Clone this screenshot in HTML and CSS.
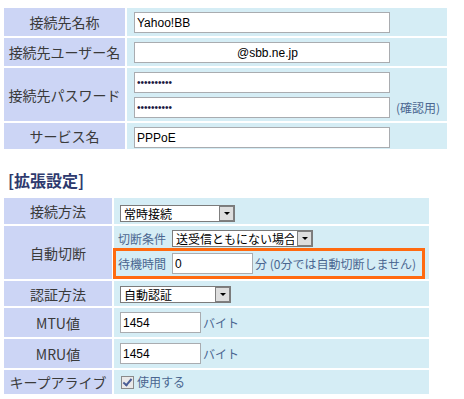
FILE: index.html
```html
<!DOCTYPE html>
<html lang="ja">
<head>
    <meta charset="UTF-8">
    <title>接続先設定</title>
    <link rel="stylesheet" href="styles.css">
</head>
<body>
    <table class="setting main">
        <tr>
            <th>接続先名称</th>
            <td><input type="text" class="long" value="Yahoo!BB"></td>
        </tr>
        <tr>
            <th>接続先ユーザー名</th>
            <td><input type="text" class="long user" value="@sbb.ne.jp"></td>
        </tr>
        <tr>
            <th>接続先パスワード</th>
            <td>
                <div class="line"><input type="password" class="long pw" value="abcdefghij"></div>
                <div class="line pw-check"><input type="password" class="long pw" value="abcdefghij"><span class="note">(確認用)</span></div>
            </td>
        </tr>
        <tr class="last">
            <th>サービス名</th>
            <td><input type="text" class="long" value="PPPoE"></td>
        </tr>
    </table>

    <h3 class="section">[拡張設定]</h3>

    <table class="setting ext">
        <tr class="sel-row first">
            <th>接続方法</th>
            <td>
                <span class="select-wrap mode">
                    <select>
                        <option>常時接続</option>
                        <option>オンデマンド接続</option>
                    </select>
                </span>
            </td>
        </tr>
        <tr class="auto-cut">
            <th>自動切断</th>
            <td>
                <div class="line cond">
                    <span class="note">切断条件</span>
                    <span class="select-wrap cond-sel">
                        <select>
                            <option>送受信ともにない場合</option>
                            <option>送信がない場合</option>
                        </select>
                    </span>
                </div>
                <div class="line wait-box">
                    <span class="note">待機時間</span>
                    <input type="text" class="short wait" value="0">
                    <span class="note">分 (0分では自動切断しません)</span>
                </div>
            </td>
        </tr>
        <tr class="sel-row">
            <th>認証方法</th>
            <td>
                <span class="select-wrap auth">
                    <select>
                        <option>自動認証</option>
                        <option>PAP</option>
                        <option>CHAP</option>
                    </select>
                </span>
            </td>
        </tr>
        <tr>
            <th>MTU値</th>
            <td><div class="line"><input type="text" class="short" value="1454"><span class="note">バイト</span></div></td>
        </tr>
        <tr>
            <th>MRU値</th>
            <td><div class="line"><input type="text" class="short" value="1454"><span class="note">バイト</span></div></td>
        </tr>
        <tr class="check-row">
            <th>キープアライブ</th>
            <td>
                <label class="line check"><input type="checkbox" checked><span class="note">使用する</span></label>
            </td>
        </tr>
    </table>
</body>
</html>
```

FILE: styles.css
```css
body {
    margin: 0;
    padding: 6px 2px;
    background-color: #ffffff;
    font-family: "Noto Sans CJK JP", sans-serif;
    color: #333333;
}
table.setting {
    border-collapse: separate;
    border-spacing: 2px;
}
.setting th {
    background-color: #ccd5f5;
    font-weight: normal;
    font-size: 14px;
    color: #3a3a3a;
    text-align: center;
    padding: 0;
    white-space: nowrap;
}
.setting td {
    background-color: #d5edf5;
    font-size: 12px;
    line-height: 16px;
    padding: 4px 7px 3px;
}
.main th { width: 121px; }
.main td { width: 306px; }
.main tr.last td { padding-bottom: 1px; }
.ext th { width: 108px; }
.ext td { width: 303px; padding: 4px 6px; }
.line {
    display: flex;
    align-items: center;
}
.pw-check {
    margin-top: 4px;
}
.note {
    color: #4a6690;
    font-size: 12px;
    line-height: 16px;
    white-space: nowrap;
}
input[type="text"],
input[type="password"] {
    box-sizing: border-box;
    display: block;
    height: 21px;
    margin: 0;
    padding: 1px 2px;
    border: 1px solid #a9acb0;
    background-color: #ffffff;
    font-family: "Liberation Sans", Arial, sans-serif;
    font-size: 12px;
    color: #000000;
    outline: none;
}
input.long { width: 256px; }
input.user { padding-left: 102px; }
input.pw { font-size: 10px; color: #1a1a40; }
.pw-check .note { margin-left: 6px; }
input.short { width: 81px; margin-right: 2px; }

/* select with XP-like drop button */
.select-wrap {
    position: relative;
    display: block;
    width: fit-content;
}
.select-wrap select {
    display: block;
    box-sizing: border-box;
    height: 17px;
    margin: 0;
    padding: 0 18px 0 3px;
    border: 1px solid #7b7b7b;
    border-radius: 0;
    background-color: #ffffff;
    appearance: none;
    -webkit-appearance: none;
    font-family: "Noto Sans CJK JP", sans-serif;
    font-size: 12px;
    line-height: 15px;
    color: #000000;
    outline: none;
}
.select-wrap::after {
    content: "";
    position: absolute;
    top: 1px;
    right: 1px;
    bottom: 1px;
    width: 15px;
    box-sizing: border-box;
    border: 1px solid #7f7f7f;
    background-color: #dedede;
    pointer-events: none;
}
.select-wrap::before {
    content: "";
    position: absolute;
    top: 7px;
    right: 5px;
    border-left: 3px solid transparent;
    border-right: 3px solid transparent;
    border-top: 3px solid #000000;
    z-index: 1;
    pointer-events: none;
}
.mode select { width: 115px; }
.cond-sel select { width: 141px; }
.auth select { width: 111px; }

.sel-row td { padding-top: 5px; padding-bottom: 3px; }
.sel-row.first td { padding-top: 7px; padding-bottom: 2px; }

.auto-cut td {
    padding: 4px 4px 0 0;
}
.cond {
    padding-left: 4px;
}
.cond .note,
.wait-box .note:first-child {
    margin-right: 6px;
}
.wait-box {
    margin: 1px 0 0 -1px;
    padding: 2px;
    border: 3px solid #ff6a10;
}
input.wait { margin-right: 2px; }

.check-row td { padding-top: 4px; padding-bottom: 4px; }
.check input[type="checkbox"] {
    appearance: none;
    -webkit-appearance: none;
    position: relative;
    box-sizing: border-box;
    width: 13px;
    height: 13px;
    margin: 0 3px 0 1px;
    border: 1px solid #8a8a8a;
    background-color: #e9e9e9;
}
.check input[type="checkbox"]:checked::after {
    content: "";
    position: absolute;
    left: 3px;
    top: 0px;
    width: 3px;
    height: 7px;
    border-right: 2px solid #4a5e96;
    border-bottom: 2px solid #4a5e96;
    transform: rotate(40deg);
}

.section {
    margin: 17px 0 4px 6px;
    font-size: 16px;
    line-height: 24px;
    font-weight: bold;
    color: #2e3a6e;
}
```
